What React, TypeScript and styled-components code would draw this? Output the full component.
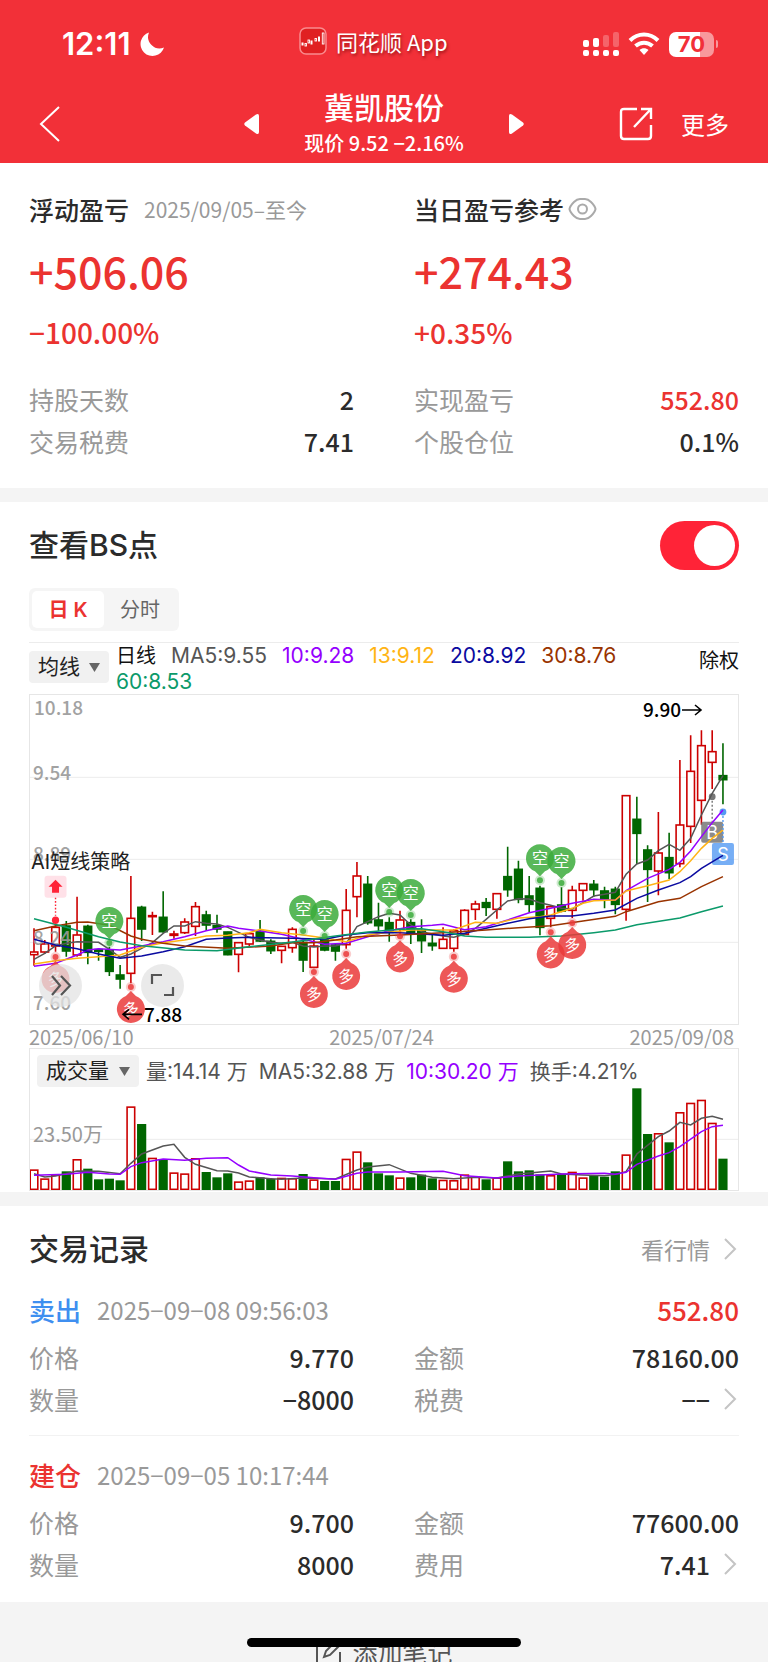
import React, { useState } from 'react';
import styled, { createGlobalStyle, css } from 'styled-components';

const CJK = '"Noto Sans CJK SC", sans-serif';
const UI = 'Inter, "Noto Sans CJK SC", sans-serif';

const color = {
  brand: '#f23038',
  red: '#eb3330',
  up: '#cc0000',
  down: '#006600',
  ink: '#2b2b2b',
  mute: '#999999',
  line: '#ececec',
  band: '#f4f4f4',
  purple: '#9500ff',
};

const GlobalStyle = createGlobalStyle`
  *, *::before, *::after { box-sizing: border-box; }
  body { margin: 0; background: ${color.band}; font-family: ${CJK}; color: ${color.ink}; }
  button, select, input { font: inherit; color: inherit; margin: 0; }
  button { border: 0; padding: 0; background: none; cursor: pointer; }
  h1, h2, h3, p, dl, dd, dt { margin: 0; font-weight: inherit; }
`;

/* ---------- header ---------- */

const Header = styled.header`
  background: ${color.brand};
  color: #fff;
  height: 163px;
`;

const StatusBar = styled.div`
  display: flex;
  align-items: center;
  justify-content: space-between;
  height: 88px;
  padding: 0 50px 0 62px;
`;

const StatusGroup = styled.div`
  display: flex;
  align-items: center;
  gap: 9px;
`;

const AppGroup = styled(StatusGroup)`
  padding-bottom: 7px;
`;

const Clock = styled.span`
  font: 600 31px/40px ${UI};
`;

const AppName = styled.span`
  font: 400 22px/34px ${CJK};
  text-shadow: 1px 2px 3px rgba(90, 0, 0, 0.55);
`;

const Nav = styled.nav`
  display: grid;
  grid-template-columns: 1fr 280px 1fr;
  align-items: center;
  height: 75px;
  padding: 0 39px 4px;
`;

const IconButton = styled.button`
  display: flex;
  justify-self: start;
`;

const StockSwitch = styled.div`
  display: flex;
  align-items: center;
  justify-content: space-between;
`;

const StockName = styled.h1`
  font-size: 30px;
  line-height: 36px;
  font-weight: 500;
  text-align: center;
`;

const StockQuote = styled.p`
  margin-top: 2px;
  font-size: 20px;
  line-height: 34px;
  font-weight: 500;
  text-align: center;
  white-space: nowrap;
`;

const NavActions = styled.div`
  display: flex;
  align-items: center;
  justify-content: flex-end;
  gap: 28px;
`;

const MoreButton = styled.button`
  font-size: 24px;
  line-height: 36px;
`;

/* ---------- shared ---------- */

const Card = styled.section<{ $top: number; $bottom: number }>`
  background: #fff;
  padding: ${(p) => p.$top}px 29px ${(p) => p.$bottom}px;
  & + & { margin-top: 14px; }
`;

const Columns = styled.div<{ $top?: number }>`
  display: grid;
  grid-template-columns: 1fr 1fr;
  column-gap: 60px;
  margin-top: ${(p) => p.$top ?? 0}px;
`;

const TitleRow = styled.div<{ $height: number }>`
  display: flex;
  align-items: center;
  justify-content: space-between;
  height: ${(p) => p.$height}px;
`;

const Title = styled.h2`
  font: 500 30px/44px ${UI};
`;

const Pair = styled.dl`
  display: flex;
  align-items: center;
  justify-content: space-between;
  height: 42px;
  font-size: 25px;
  line-height: 36px;
`;

const PairLabel = styled.dt`
  color: ${color.mute};
`;

const PairValue = styled.dd<{ $red?: boolean }>`
  display: flex;
  align-items: center;
  gap: 14px;
  font-weight: 500;
  color: ${(p) => (p.$red ? color.red : color.ink)};
`;

/* ---------- profit summary ---------- */

const Caption = styled.div`
  display: flex;
  align-items: center;
  height: 36px;
`;

const CaptionName = styled.h2`
  font-size: 25px;
  line-height: 36px;
  font-weight: 500;
`;

const CaptionDate = styled.span`
  margin-left: 15px;
  font-size: 21px;
  line-height: 36px;
  color: ${color.mute};
`;

const Amount = styled.p`
  margin-top: 17px;
  font-size: 43px;
  line-height: 52px;
  font-weight: 500;
  color: ${color.red};
`;

const Percent = styled.p`
  margin-top: 18px;
  font-size: 28px;
  line-height: 36px;
  font-weight: 500;
  color: ${color.red};
`;

/* ---------- chart card ---------- */

const Toggle = styled.input`
  appearance: none;
  position: relative;
  width: 79px;
  height: 49px;
  border-radius: 25px;
  background: #ff2337;
  cursor: pointer;
  &::after {
    content: '';
    position: absolute;
    top: 4px;
    right: 4px;
    width: 41px;
    height: 41px;
    border-radius: 50%;
    background: #fff;
  }
  &:not(:checked) { background: #ddd; }
  &:not(:checked)::after { right: auto; left: 4px; }
`;

const Segments = styled.div`
  display: inline-flex;
  margin-top: 18px;
  padding: 3px;
  height: 43px;
  border-radius: 6px;
  background: #f5f5f5;
  vertical-align: top;
`;

const Segment = styled.button<{ $active: boolean }>`
  width: 72px;
  height: 37px;
  border-radius: 5px;
  font: 400 20px/36px ${UI};
  color: #666;
  ${(p) =>
    p.$active &&
    css`
      background: #fff;
      color: ${color.red};
      font-weight: 600;
    `}
`;

const LegendBar = styled.div`
  display: flex;
  align-items: flex-start;
  min-height: 51px;
  margin-top: 11px;
  border-top: 1px solid ${color.line};
`;

const Picker = styled.label<{ $width: number; $top?: number }>`
  position: relative;
  flex: none;
  display: flex;
  align-items: center;
  width: ${(p) => p.$width}px;
  height: 32px;
  margin-top: ${(p) => p.$top ?? 0}px;
  border-radius: 4px;
  background: #f1f1f1;
  svg { position: absolute; right: 9px; pointer-events: none; }
  select {
    appearance: none;
    width: 100%;
    height: 32px;
    border: 0;
    padding: 0 0 0 9px;
    background: none;
    font: 400 21px/30px ${UI};
    color: #222;
  }
`;

const Legend = styled.p<{ $gap: number }>`
  flex: 1;
  margin-left: 7px;
  padding-right: 28px;
  font: 400 21px/25px ${UI};
  span { margin-right: ${(p) => p.$gap}px; }
`;

const LegendItem = styled.span<{ $color?: string }>`
  display: inline-block;
  color: ${(p) => p.$color ?? '#555'};
`;

const LegendTitle = styled(LegendItem)`
  font-size: 20px;
`;

const RightsButton = styled.button`
  margin-top: 5px;
  font: 400 20px/26px ${UI};
  color: #111;
`;

const ChartFrame = styled.div`
  position: relative;
  border: 1px solid #e6e6e6;
  & > svg { display: block; width: 100%; height: auto; }
`;

const RoundButton = styled.button<{ $left: number }>`
  position: absolute;
  left: ${(p) => p.$left}px;
  bottom: 17px;
  width: 43px;
  height: 43px;
  border-radius: 50%;
  background: rgba(228, 228, 228, 0.76);
  svg { display: block; width: 43px; height: 43px; }
`;

const DateAxis = styled.div`
  display: flex;
  justify-content: space-between;
  height: 23px;
  padding-right: 5px;
  font-size: 20px;
  line-height: 24px;
  color: ${color.mute};
`;

const VolumeBar = styled.div`
  display: flex;
  align-items: center;
  padding: 6px 0 0 7px;
`;

/* ---------- trade records ---------- */

const MoreLink = styled.a`
  display: flex;
  align-items: center;
  gap: 14px;
  font-size: 23px;
  line-height: 36px;
  color: ${color.mute};
  text-decoration: none;
`;

const Trade = styled.article`
  padding-top: 19px;
  & + & {
    margin-top: 15px;
    border-top: 1px solid #f2f2f2;
  }
`;

const TradeHead = styled.div`
  display: flex;
  align-items: center;
  height: 40px;
  margin-bottom: 6px;
`;

const TradeKind = styled.h3<{ $color: string }>`
  font-size: 26px;
  line-height: 38px;
  font-weight: 500;
  color: ${(p) => p.$color};
`;

const TradeTime = styled.time`
  margin-left: 16px;
  font-size: 24px;
  line-height: 36px;
  color: ${color.mute};
`;

const TradeProfit = styled.span`
  margin-left: auto;
  font-size: 26px;
  line-height: 38px;
  font-weight: 500;
  color: ${color.red};
`;

const Footer = styled.footer`
  display: flex;
  justify-content: center;
  height: 61px;
  padding-top: 31px;
  overflow: hidden;
  background: ${color.band};
`;

const NoteButton = styled.button`
  display: flex;
  align-items: center;
  gap: 10px;
  height: 38px;
  font-size: 25px;
  line-height: 38px;
  color: #555;
`;

const HomeIndicator = styled.div`
  position: fixed;
  left: 50%;
  bottom: 15px;
  width: 274px;
  height: 9px;
  margin-left: -137px;
  border-radius: 5px;
  background: #000;
`;

/* ---------- chart data: one unit is a third of a pixel ---------- */

// rising flag, high, body top, body bottom, low
type Candle = [number, number, number, number, number];
const CANDLES: Candle[] = [
  [1, 715, 786, 794, 827], [1, 750, 762, 786, 792], [1, 700, 712, 768, 785], [0, 693, 708, 783, 800],
  [1, 620, 735, 795, 800], [0, 704, 709, 787, 823], [0, 775, 779, 784, 812], [0, 770, 780, 844, 858],
  [0, 825, 855, 867, 896], [1, 558, 685, 850, 880], [0, 647, 652, 717, 753], [1, 665, 677, 680, 735],
  [0, 604, 682, 725, 728], [1, 722, 732, 736, 746], [1, 685, 696, 728, 732], [1, 636, 650, 709, 738],
  [0, 662, 675, 705, 722], [0, 674, 707, 717, 728], [0, 725, 726, 794, 796], [1, 757, 758, 793, 847],
  [1, 731, 731, 762, 770], [0, 690, 724, 753, 756], [0, 748, 754, 782, 792], [1, 768, 769, 781, 820],
  [1, 712, 718, 773, 788], [0, 750, 757, 810, 846], [1, 746, 768, 832, 835], [0, 742, 748, 780, 784],
  [0, 760, 765, 783, 812], [1, 597, 661, 764, 776], [1, 516, 558, 620, 682], [0, 558, 583, 698, 704],
  [0, 638, 690, 707, 722], [0, 682, 698, 727, 755], [1, 662, 690, 718, 735], [0, 688, 698, 730, 762],
  [0, 688, 722, 752, 789], [0, 735, 760, 767, 782], [1, 712, 748, 775, 777], [1, 718, 722, 775, 785],
  [1, 658, 661, 733, 736], [1, 632, 642, 658, 690], [0, 624, 638, 652, 678], [1, 610, 611, 658, 686],
  [0, 470, 560, 599, 620], [0, 512, 538, 628, 640], [0, 558, 618, 643, 667], [0, 587, 595, 712, 736],
  [1, 648, 650, 685, 712], [0, 592, 645, 663, 667], [1, 587, 601, 661, 684], [1, 580, 581, 601, 632],
  [0, 570, 583, 599, 620], [0, 590, 603, 628, 655], [0, 590, 598, 643, 673], [1, 316, 317, 658, 692],
  [0, 320, 388, 430, 522], [0, 466, 480, 538, 636], [1, 366, 489, 543, 616], [0, 428, 503, 548, 567],
  [1, 210, 405, 521, 532], [1, 136, 244, 409, 459], [1, 121, 167, 331, 404], [1, 121, 185, 217, 297],
  [0, 160, 257, 269, 343],
];

type Point = [number, number];
const PRICE_LINES: { stroke: string; points: Point[] }[] = [
  { stroke: '#555555', points: [[0,808],[1,790],[2,768],[3,760],[4,755],[6,757],[7,778],[8,802],[9,792],[10,775],[11,758],[12,730],[13,708],[14,708],[15,695],[16,700],[17,702],[18,712],[19,727],[20,742],[21,750],[22,757],[23,760],[24,757],[25,768],[26,771],[27,768],[28,768],[29,760],[30,710],[31,695],[32,680],[33,670],[34,675],[35,705],[36,725],[37,732],[38,738],[39,742],[40,733],[41,715],[42,688],[43,660],[44,633],[45,626],[46,627],[47,638],[48,646],[49,655],[50,657],[51,638],[52,618],[53,613],[54,607],[55,553],[56,522],[57,510],[58,482],[59,463],[60,481],[61,445],[62,375],[63,310],[64,257]] },
  { stroke: color.purple, points: [[0,829],[2,820],[4,795],[5,780],[6,776],[8,780],[10,768],[12,755],[14,740],[16,722],[18,708],[19,715],[21,723],[23,733],[25,748],[27,763],[29,760],[31,740],[33,722],[35,710],[37,706],[38,703],[40,719],[42,710],[44,690],[46,668],[48,655],[50,640],[52,628],[54,631],[55,602],[57,565],[59,538],[60,517],[61,483],[62,440],[63,398],[64,360]] },
  { stroke: '#ffb414', points: [[0,822],[2,812],[4,805],[6,800],[8,795],[10,772],[12,758],[14,750],[16,738],[18,736],[20,728],[21,718],[23,728],[25,735],[27,744],[29,755],[31,735],[33,727],[35,720],[37,720],[39,720],[40,708],[41,697],[43,700],[45,684],[47,680],[48,675],[50,655],[51,640],[52,632],[54,630],[55,603],[57,587],[59,570],[60,545],[61,512],[62,475],[63,445],[64,420]] },
  { stroke: '#0a0aa0', points: [[0,748],[2,765],[4,776],[6,792],[8,805],[10,798],[12,785],[14,770],[16,748],[18,744],[20,742],[24,745],[27,748],[29,735],[31,728],[34,728],[36,732],[38,736],[40,730],[42,715],[44,700],[46,686],[48,678],[50,678],[52,670],[54,660],[56,625],[58,600],[60,578],[61,560],[62,535],[64,496]] },
  { stroke: '#993300', points: [[0,722],[2,708],[4,697],[5,696],[7,706],[9,738],[10,748],[12,760],[14,768],[18,775],[22,768],[24,758],[26,758],[28,750],[30,740],[34,735],[38,728],[42,720],[45,713],[48,707],[51,693],[54,679],[55,665],[58,635],[60,625],[62,590],[64,560]] },
  { stroke: '#0b9a6a', points: [[0,686],[3,712],[6,740],[8,756],[10,767],[14,780],[17,782],[20,770],[24,756],[28,738],[31,726],[34,718],[36,716],[38,725],[40,738],[42,742],[46,742],[49,738],[52,728],[54,720],[56,704],[60,684],[62,665],[64,648]] },
];

const SHORT_SIGNALS: Point[] = [[7, 693], [25, 657], [27, 672], [33, 600], [35, 609], [47, 505], [49, 513]];
const LONG_SIGNALS: Point[] = [[2, 867], [9, 957], [26, 912], [29, 858], [34, 805], [39, 866], [48, 793], [50, 765]];

const PRICE_LABELS: [string, number, number][] = [
  ['10.18', 4, 55], ['9.54', 3, 248], ['8.89', 3, 492], ['8.24', 3, 745], ['7.60', 3, 938],
];

const VOLUMES = [
  448, 475, 463, 454, 417, 446, 478, 476, 481, 259, 312, 413, 418, 457, 460, 414, 456, 472, 460, 484, 481, 472,
  477, 473, 474, 462, 478, 483, 483, 416, 394, 427, 460, 466, 472, 472, 464, 475, 479, 480, 463, 468, 478, 472,
  424, 454, 451, 463, 465, 462, 455, 472, 468, 470, 454, 403, 205, 342, 339, 367, 276, 248, 239, 308, 416,
];

const VOLUME_LINES: { stroke: string; points: Point[] }[] = [
  { stroke: '#555555', points: [[0,461],[1,471],[2,468],[4,453],[6,454],[8,461],[9,430],[10,402],[12,378],[13,373],[14,412],[15,433],[17,452],[18,453],[19,459],[20,471],[22,476],[23,478],[25,474],[28,477],[30,450],[31,441],[33,434],[35,460],[37,472],[39,476],[41,472],[43,474],[45,462],[48,453],[49,462],[51,465],[53,467],[54,463],[55,455],[56,402],[58,350],[59,333],[60,307],[61,315],[62,295],[63,289],[64,298]] },
  { stroke: color.purple, points: [[0,466],[3,463],[5,457],[7,462],[8,463],[9,440],[10,428],[12,417],[14,421],[16,415],[18,413],[19,435],[20,453],[22,465],[24,468],[26,473],[28,478],[30,460],[31,456],[34,456],[38,454],[40,467],[43,474],[45,468],[49,462],[53,460],[54,463],[55,457],[56,433],[58,408],[59,398],[60,380],[62,335],[63,320],[64,316]] },
];

const PRICE_TOP = 15;
const VOLUME_TOP = 201;
const xAt = (i: number) => 4 + i * 10.765;
const priceY = (v: number) => (v - PRICE_TOP) / 3;
const volumeY = (v: number) => (v - VOLUME_TOP) / 3;
const toPoints = (points: Point[], y: (v: number) => number) =>
  points.map(([i, v]) => `${xAt(i)},${y(v)}`).join(' ');

/* ---------- drawings ---------- */

const ChevronRight = () => (
  <svg width="15" height="22" viewBox="0 0 15 22" fill="none" stroke="#c4c4c4" strokeWidth="2" aria-hidden="true">
    <path d="M1 1l10 10L1 21" />
  </svg>
);

const Caret = () => (
  <svg width="11" height="9" viewBox="0 0 11 9" fill="#666" aria-hidden="true">
    <path d="M0 0h11L5.500 9z" />
  </svg>
);

function Signal({ at, kind }: { at: Point; kind: 'short' | 'long' }) {
  const isShort = kind === 'short';
  const fill = isShort ? '#3cab3c' : '#ea3a3a';
  const dir = isShort ? 1 : -1;
  return (
    <g transform={`translate(${xAt(at[0])} ${priceY(at[1])})`}>
      <circle cy={dir * 22} r="5" fill={fill} opacity="0.25" />
      <circle cy={dir * 22} r="3" fill={fill} opacity="0.85" />
      <path
        d={isShort ? 'M-5 13A14 14 0 1 1 5 13L0 18Z' : 'M-5 -13A14 14 0 1 0 5 -13L0 -18Z'}
        fill={fill}
        opacity="0.85"
      />
      <text
        y="6"
        textAnchor="middle"
        fontSize="16"
        fontFamily={CJK}
        fill="#fff"
        transform={isShort ? undefined : 'rotate(-10)'}
      >
        {isShort ? '空' : '多'}
      </text>
    </g>
  );
}

function PriceChart() {
  return (
    <svg viewBox="0 0 708 329" role="img" aria-label="日K线">
      {[262, 508, 757].map((v) => (
        <path key={v} d={`M0 ${priceY(v)}H708`} stroke={color.line} />
      ))}
      {CANDLES.map(([rising, high, top, bottom, low], i) => {
        const x = xAt(i);
        const stroke = rising ? color.up : color.down;
        return (
          <g key={i} stroke={stroke} strokeWidth="1.6">
            <path d={`M${x} ${priceY(high)}V${priceY(top)}M${x} ${priceY(bottom)}V${priceY(low)}`} />
            <rect
              x={x - 3.8}
              y={priceY(top)}
              width="7.6"
              height={priceY(bottom) - priceY(top)}
              fill={rising ? '#fff' : stroke}
            />
          </g>
        );
      })}
      {PRICE_LABELS.map(([text, x, v]) => (
        <text key={text} x={x} y={priceY(v) + 7} fontSize="19" fontWeight="500" fontFamily={CJK} fill="#999" opacity="0.9">
          {text}
        </text>
      ))}

      {/* buy and sell flags */}
      <g fontFamily={UI} fontSize="18" textAnchor="middle">
        <path d={`M${xAt(63)} ${priceY(320)}V${priceY(395)}`} stroke="#777" strokeWidth="1.4" strokeDasharray="2 2" />
        <circle cx={xAt(63)} cy={priceY(320)} r="3.4" fill="#777" />
        <rect x={xAt(63) - 11} y={priceY(395)} width="22" height="21" rx="2" fill="#777" opacity="0.85" />
        <text x={xAt(63)} y={priceY(427) + 7} fill="#fff">B</text>
        <path d={`M${xAt(64)} ${priceY(366)}V${priceY(459)}`} stroke="#549af2" strokeWidth="1.4" strokeDasharray="2 2" />
        <circle cx={xAt(64)} cy={priceY(366)} r="3.4" fill="#549af2" />
        <rect x={xAt(64) - 11} y={priceY(459)} width="22" height="22" rx="2" fill="#549af2" opacity="0.8" />
        <text x={xAt(64)} y={priceY(492) + 7} fill="#fff">S</text>
      </g>

      {PRICE_LINES.map(({ stroke, points }) => (
        <polyline key={stroke} points={toPoints(points, priceY)} fill="none" stroke={stroke} strokeWidth="1.5" />
      ))}

      {SHORT_SIGNALS.map((at) => (
        <Signal key={at[0]} at={at} kind="short" />
      ))}
      {LONG_SIGNALS.map((at) => (
        <Signal key={at[0]} at={at} kind="long" />
      ))}

      {/* strategy marker */}
      <text x="1" y={priceY(515) + 7} fontSize="20" fontFamily={UI} fill="#222">
        AI短线策略
      </text>
      <g transform={`translate(${xAt(2)} ${priceY(590)})`}>
        <rect x="-11" y="-11" width="22" height="22" rx="3" fill="#ffe1e8" />
        <path d="M0 -7L7 0H3.5V6H-3.5V0H-7Z" fill="#ff2337" />
        <path d="M0 11V29" stroke="#ff2337" strokeWidth="1.4" strokeDasharray="1.6 1.8" />
        <circle cy="33.5" r="3.6" fill="#ff2337" />
      </g>

      {/* extremes */}
      <g fontFamily={CJK} fontSize="19" fontWeight="500" fill="#000">
        <text x={613} y={priceY(60) + 7}>9.90</text>
        <text x={114} y={priceY(975) + 7}>7.88</text>
      </g>
      <g fill="none" stroke="#000" strokeWidth="1.6">
        <path d={`M652 ${priceY(60)}h19m-6 -5l6 5l-6 5`} />
        <path d={`M112 ${priceY(973)}h-19m6 -5l-6 5l6 5`} />
      </g>
    </svg>
  );
}

function VolumeChart() {
  return (
    <svg viewBox="0 0 708 103" role="img" aria-label="成交量">
      <path d={`M0 ${volumeY(358)}H708`} stroke={color.line} />
      <text x="3" y={volumeY(346) + 7} fontSize="20" fontFamily={CJK} fill="#999">
        23.50万
      </text>
      {VOLUMES.map((v, i) => {
        const rising = CANDLES[i][0] === 1;
        return (
          <rect
            key={i}
            x={xAt(i) - 3.8}
            y={volumeY(v) + 0.8}
            width="7.6"
            height={(508 - v) / 3 - 0.8}
            fill={rising ? '#fff' : color.down}
            stroke={rising ? color.up : color.down}
            strokeWidth="1.6"
          />
        );
      })}
      {VOLUME_LINES.map(({ stroke, points }) => (
        <polyline key={stroke} points={toPoints(points, volumeY)} fill="none" stroke={stroke} strokeWidth="1.5" />
      ))}
    </svg>
  );
}

const StatusIcons = () => (
  <>
    <svg width="36" height="26" viewBox="0 0 36 26" fill="#fff" aria-hidden="true">
      {[0, 10, 20, 30].map((x) => (
        <rect key={x} x={x} y="19" width="6" height="6" rx="2" />
      ))}
      <rect x="0" y="9" width="6" height="7" rx="2" />
      <rect x="10" y="7" width="6" height="9" rx="2" />
      <rect x="20" y="4" width="6" height="12" rx="2" opacity="0.25" />
      <rect x="30" y="1" width="6" height="15" rx="2" opacity="0.25" />
    </svg>
    <svg width="32" height="24" viewBox="0 0 32 24" fill="none" stroke="#fff" strokeWidth="4" aria-hidden="true">
      <path d="M2 8.5C10 0.500 22 0.500 30 8.500" />
      <path d="M7.500 14C12.500 9.500 19.500 9.500 24.500 14" />
      <path d="M16 23L11.500 18C14 15.500 18 15.500 20.500 18Z" fill="#fff" stroke="none" />
    </svg>
  </>
);

const Battery = styled.span`
  position: relative;
  display: flex;
  align-items: center;
  justify-content: center;
  width: 45px;
  height: 25px;
  margin-right: 4px;
  border-radius: 7px;
  background: linear-gradient(90deg, #fff 70%, #f8989c 70%);
  font: 700 22px/25px ${UI};
  color: ${color.brand};
  &::after {
    content: '';
    position: absolute;
    right: -4px;
    width: 2px;
    height: 8px;
    border-radius: 0 2px 2px 0;
    background: #f8989c;
  }
`;

const AppLogo = () => (
  <svg width="28" height="28" viewBox="0 0 28 28" fill="none" aria-hidden="true">
    <rect x="1" y="1" width="26" height="26" rx="6" fill="#e02022" stroke="#f98b8e" strokeWidth="1.500" />
    <path d="M3.500 15.500v3M12.500 13.500v4M20 9.500v5" stroke="#fff" strokeWidth="2" />
    <g stroke="#fff" strokeWidth="0.900">
      <rect x="6" y="16.500" width="1.500" height="2.500" />
      <rect x="9" y="13" width="1.500" height="3" />
      <rect x="16" y="11.500" width="1.500" height="2.500" />
      <rect x="23.300" y="6" width="1.700" height="11" />
    </g>
  </svg>
);

/* ---------- page ---------- */

interface TradeRecord {
  kind: string;
  tint: string;
  time: string;
  profit?: string;
  rows: [string, string][];
}

const TRADES: TradeRecord[] = [
  {
    kind: '卖出',
    tint: '#3f8ff0',
    time: '2025−09−08 09:56:03',
    profit: '552.80',
    rows: [['价格', '9.770'], ['金额', '78160.00'], ['数量', '−8000'], ['税费', '−−']],
  },
  {
    kind: '建仓',
    tint: color.red,
    time: '2025−09−05 10:17:44',
    rows: [['价格', '9.700'], ['金额', '77600.00'], ['数量', '8000'], ['费用', '7.41']],
  },
];

const MA_ITEMS: [string, string][] = [
  ['MA5:9.55', '#555555'], ['10:9.28', color.purple], ['13:9.12', '#ffb414'],
  ['20:8.92', '#0a0aa0'], ['30:8.76', '#993300'], ['60:8.53', '#0b9a6a'],
];

export default function App() {
  const [showPoints, setShowPoints] = useState(true);
  const [period, setPeriod] = useState('日 K');

  return (
    <>
      <GlobalStyle />
      <Header>
        <StatusBar>
          <StatusGroup>
            <Clock>12:11</Clock>
            <svg width="24" height="24" viewBox="0 0 24 24" fill="#fff" aria-hidden="true">
              <path d="M9 0.500A12 12 0 1 0 24 15.500A11.500 11.500 0 0 1 9 0.500Z" />
            </svg>
          </StatusGroup>
          <AppGroup>
            <AppLogo />
            <AppName>同花顺 App</AppName>
          </AppGroup>
          <StatusGroup>
            <StatusIcons />
            <Battery>70</Battery>
          </StatusGroup>
        </StatusBar>
        <Nav>
          <IconButton aria-label="返回">
            <svg width="22" height="36" viewBox="0 0 22 36" fill="none" stroke="#fff" strokeWidth="2">
              <path d="M20 1L2 18L20 35" />
            </svg>
          </IconButton>
          <StockSwitch>
            <IconButton aria-label="上一只">
              <svg width="15" height="20" viewBox="0 0 15 20" fill="#fff">
                <path d="M15 2v16q0 3-3 1.500L1 11.500q-1.500-1.500 0-3L12 0.500q3-1.500 3 1.500z" />
              </svg>
            </IconButton>
            <div>
              <StockName>冀凯股份</StockName>
              <StockQuote>现价 9.52 −2.16%</StockQuote>
            </div>
            <IconButton aria-label="下一只">
              <svg width="15" height="20" viewBox="0 0 15 20" fill="#fff">
                <path d="M0 2v16q0 3 3 1.500L14 11.500q1.500-1.500 0-3L3 0.500q-3-1.500-3 1.500z" />
              </svg>
            </IconButton>
          </StockSwitch>
          <NavActions>
            <IconButton aria-label="分享">
              <svg width="34" height="34" viewBox="0 0 34 34" fill="none" stroke="#fff" strokeWidth="2.400">
                <path d="M18 2H5Q2 2 2 5V29Q2 32 5 32H29Q32 32 32 29V18" />
                <path d="M22 2H32V12M32 2L15 20" />
              </svg>
            </IconButton>
            <MoreButton>更多</MoreButton>
          </NavActions>
        </Nav>
      </Header>

      <main>
        <Card $top={28} $bottom={26}>
          <Columns>
            <div>
              <Caption>
                <CaptionName>浮动盈亏</CaptionName>
                <CaptionDate>2025/09/05–至今</CaptionDate>
              </Caption>
              <Amount>+506.06</Amount>
              <Percent>−100.00%</Percent>
            </div>
            <div>
              <Caption>
                <CaptionName>当日盈亏参考</CaptionName>
                <IconButton aria-label="显示金额">
                  <svg width="36" height="24" viewBox="0 0 36 24" fill="none" stroke="#aaa" strokeWidth="2">
                    <path d="M5.500 12Q6 9 10 5Q13 2 16 2H21Q24 2 27 5Q31 9 31.500 12Q31 15 27 19Q24 22 21 22H16Q13 22 10 19Q6 15 5.500 12Z" />
                    <circle cx="18.500" cy="12" r="4.500" />
                  </svg>
                </IconButton>
              </Caption>
              <Amount>+274.43</Amount>
              <Percent>+0.35%</Percent>
            </div>
          </Columns>
          <Columns $top={28}>
            <Pair><PairLabel>持股天数</PairLabel><PairValue>2</PairValue></Pair>
            <Pair><PairLabel>实现盈亏</PairLabel><PairValue $red>552.80</PairValue></Pair>
            <Pair><PairLabel>交易税费</PairLabel><PairValue>7.41</PairValue></Pair>
            <Pair><PairLabel>个股仓位</PairLabel><PairValue>0.1%</PairValue></Pair>
          </Columns>
        </Card>

        <Card $top={18} $bottom={1}>
          <TitleRow $height={50}>
            <Title><label htmlFor="bs">查看BS点</label></Title>
            <Toggle id="bs" type="checkbox" checked={showPoints} onChange={(e) => setShowPoints(e.target.checked)} />
          </TitleRow>
          <Segments>
            {['日 K', '分时'].map((name) => (
              <Segment key={name} $active={period === name} onClick={() => setPeriod(name)}>
                {name}
              </Segment>
            ))}
          </Segments>
          <LegendBar>
            <Picker $width={80} $top={8}>
              <select aria-label="指标" defaultValue="均线"><option>均线</option></select>
              <Caret />
            </Picker>
            <Legend $gap={15}>
              <LegendTitle $color="#111">日线</LegendTitle>
              {MA_ITEMS.map(([text, tint]) => (
                <LegendItem key={text} $color={tint}>{text}</LegendItem>
              ))}
            </Legend>
            <RightsButton>除权</RightsButton>
          </LegendBar>
          <ChartFrame>
            <PriceChart />
            <RoundButton $left={9} aria-label="展开">
              <svg viewBox="0 0 43 43" fill="none" stroke="#555" strokeWidth="2.200">
                <path d="M13 12L21 21.500L13 31M22 12L31 21.500L22 31" />
              </svg>
            </RoundButton>
            <RoundButton $left={111} aria-label="全屏">
              <svg viewBox="0 0 43 43" fill="none" stroke="#555" strokeWidth="2.200">
                <path d="M11 20V11H21M23 31H32V23" />
              </svg>
            </RoundButton>
          </ChartFrame>
          <DateAxis>
            <span>2025/06/10</span>
            <span>2025/07/24</span>
            <span>2025/09/08</span>
          </DateAxis>
          <ChartFrame>
            <VolumeBar>
              <Picker $width={102}>
                <select aria-label="副图" defaultValue="成交量"><option>成交量</option></select>
                <Caret />
              </Picker>
              <Legend $gap={11}>
                <LegendItem>量:14.14 万</LegendItem>
                <LegendItem>MA5:32.88 万</LegendItem>
                <LegendItem $color={color.purple}>10:30.20 万</LegendItem>
                <LegendItem>换手:4.21%</LegendItem>
              </Legend>
            </VolumeBar>
            <VolumeChart />
          </ChartFrame>
        </Card>

        <Card $top={21} $bottom={17}>
          <TitleRow $height={44}>
            <Title>交易记录</Title>
            <MoreLink href="#quote">看行情 <ChevronRight /></MoreLink>
          </TitleRow>
          {TRADES.map((trade) => (
            <Trade key={trade.time}>
              <TradeHead>
                <TradeKind $color={trade.tint}>{trade.kind}</TradeKind>
                <TradeTime>{trade.time}</TradeTime>
                {trade.profit && <TradeProfit>{trade.profit}</TradeProfit>}
              </TradeHead>
              <Columns>
                {trade.rows.map(([label, value], i) => (
                  <Pair key={label}>
                    <PairLabel>{label}</PairLabel>
                    <PairValue>{value}{i === 3 && <ChevronRight />}</PairValue>
                  </Pair>
                ))}
              </Columns>
            </Trade>
          ))}
        </Card>
      </main>

      <Footer>
        <NoteButton>
          <svg width="27" height="27" viewBox="0 0 27 27" fill="none" stroke="#555" strokeWidth="2" aria-hidden="true">
            <path d="M13 2H2V25H25V13" />
            <path d="M9 18L11 12L21 2L25 6L15 16Z" />
          </svg>
          添加笔记
        </NoteButton>
      </Footer>
      <HomeIndicator />
    </>
  );
}
